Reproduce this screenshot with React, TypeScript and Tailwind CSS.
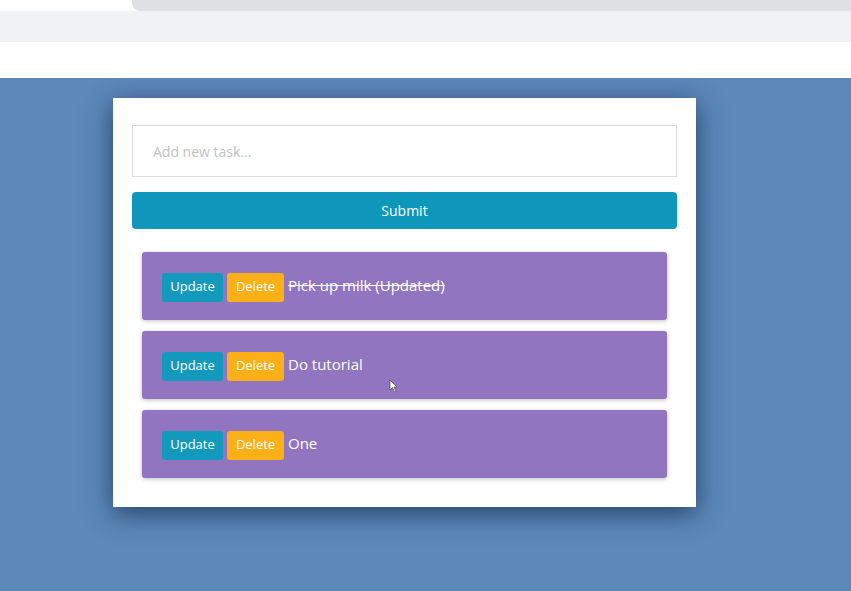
import React from "react";

type Task = { id: number; text: string; done: boolean };

const tasks: Task[] = [
  { id: 1, text: "Pick up milk (Updated)", done: true },
  { id: 2, text: "Do tutorial", done: false },
  { id: 3, text: "One", done: false },
];

function TaskRow({ task }: { task: Task }) {
  return (
    <div className="flex h-[68px] items-center rounded-[3px] bg-[#9175c1] px-5 pt-[2px] shadow-[0_1px_4px_rgba(0,0,0,0.25)]">
      <button
        type="button"
        className="h-[29px] w-[61px] rounded-[3px] bg-[#1399bb] text-[13px] text-white"
      >
        Update
      </button>
      <button
        type="button"
        className="ml-1 h-[29px] w-[57px] rounded-[3px] bg-[#fbb018] text-[13px] text-white"
      >
        Delete
      </button>
      <span
        className={`-mt-[3px] ml-1 text-[15px] text-white ${task.done ? "line-through" : ""}`}
      >
        {task.text}
      </span>
    </div>
  );
}

export default function App() {
  return (
    <div className="relative flex h-[591px] w-[851px] flex-col overflow-hidden bg-white font-['Open_Sans',sans-serif]">
      {/* browser chrome */}
      <div className="flex h-[11px]">
        <div className="w-[132px] bg-white" />
        <div className="flex-1 rounded-bl-[8px] bg-[#dfe1e5]" />
      </div>
      <div className="h-[31px] bg-[#f1f2f4]" />
      <div className="h-[36px] bg-white" />

      <div className="flex-1 bg-[#5c88ba] pl-[113px] pt-[20px]">
        <div className="w-[583px] bg-white px-[19px] pb-[29px] pt-[27px] shadow-[0_6px_24px_rgba(20,40,70,0.75)]">
          <input
            placeholder="Add new task..."
            className="h-[52px] w-full border border-[#dcdcdc] px-5 text-[14px] text-gray-700 outline-none placeholder:text-[#c2c2c2]"
          />
          <button
            type="button"
            className="mt-[15px] h-[37px] w-full rounded-[4px] bg-[#0e97bb] text-[14px] text-white"
          >
            Submit
          </button>
          <div className="mt-[23px] flex flex-col gap-[11px] px-[10px]">
            {tasks.map((t) => (
              <TaskRow key={t.id} task={t} />
            ))}
          </div>
        </div>
      </div>

      {/* mouse pointer */}
      <svg
        className="absolute left-[389px] top-[379px]"
        width="9"
        height="14"
        viewBox="0 0 9 14"
      >
        <path d="M1 1 L1 11 L3.5 8.5 L5.5 13 L7 12.3 L5 8 L8 8 Z" fill="#fff" stroke="#555" strokeWidth="0.8" />
      </svg>
    </div>
  );
}
